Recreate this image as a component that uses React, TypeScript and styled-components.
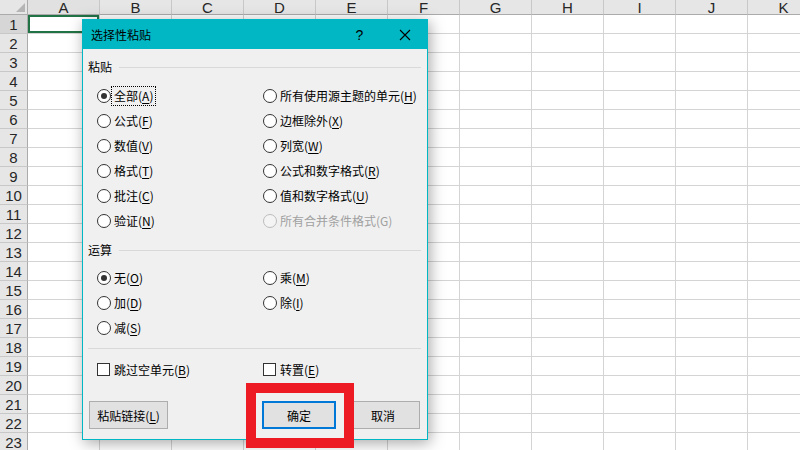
import React from "react"
import styled, { createGlobalStyle } from "styled-components"

const GlobalStyle = createGlobalStyle`
  html, body {
    margin: 0;
    padding: 0;
    background: #ffffff;
    overflow: hidden;
  }
  body {
    font-family: "Noto Sans CJK SC", "Liberation Sans", sans-serif;
  }
`

const COLUMNS = ["A", "B", "C", "D", "E", "F", "G", "H", "I", "J", "K"]
const ROW_COUNT = 23

const pasteOptions = [
  { label: "全部", key: "A", checked: true, focused: true },
  { label: "所有使用源主题的单元", key: "H" },
  { label: "公式", key: "F" },
  { label: "边框除外", key: "X" },
  { label: "数值", key: "V" },
  { label: "列宽", key: "W" },
  { label: "格式", key: "T" },
  { label: "公式和数字格式", key: "R" },
  { label: "批注", key: "C" },
  { label: "值和数字格式", key: "U" },
  { label: "验证", key: "N" },
  { label: "所有合并条件格式", key: "G", disabled: true },
]

const operationOptions = [
  { label: "无", key: "O", checked: true },
  { label: "乘", key: "M" },
  { label: "加", key: "D" },
  { label: "除", key: "I" },
  { label: "减", key: "S" },
]

type Opt = { label: string; key: string; checked?: boolean; focused?: boolean; disabled?: boolean }

function App() {
  return (
    <>
      <GlobalStyle />
      <Screen>
        <Sheet>
          <Corner />
          {COLUMNS.map((c) => (
            <ColHeader key={c} $active={c === "A"}>{c}</ColHeader>
          ))}
          {Array.from({ length: ROW_COUNT }).map((_, r) => (
            <React.Fragment key={r}>
              <RowHeader $active={r === 0}>{r + 1}</RowHeader>
              {COLUMNS.map((c) => (
                <Cell key={c} $selected={r === 0 && c === "A"} />
              ))}
            </React.Fragment>
          ))}
        </Sheet>

        <Dialog>
          <TitleBar>
            <Title>选择性粘贴</Title>
            <TitleButton>?</TitleButton>
            <TitleButton>
              <svg width="12" height="12" viewBox="0 0 12 12">
                <path d="M1 1 L11 11 M11 1 L1 11" stroke="#000" strokeWidth="1.1" />
              </svg>
            </TitleButton>
          </TitleBar>

          <Body>
            <SectionHeader>
              <span>粘贴</span>
            </SectionHeader>
            <OptionGrid $top={6}>
              {pasteOptions.map((o: Opt) => (
                <RadioOption key={o.key} opt={o} />
              ))}
            </OptionGrid>

            <SectionHeader $top={7}>
              <span>运算</span>
            </SectionHeader>
            <OptionGrid $top={5}>
              {operationOptions.map((o: Opt) => (
                <RadioOption key={o.key} opt={o} />
              ))}
            </OptionGrid>

            <Divider />

            <OptionGrid $top={8}>
              <Option>
                <Checkbox />
                <OptionText>跳过空单元(<u>B</u>)</OptionText>
              </Option>
              <Option>
                <Checkbox />
                <OptionText>转置(<u>E</u>)</OptionText>
              </Option>
            </OptionGrid>

            <ButtonRow>
              <Button $width={79}>粘贴链接(<u>L</u>)</Button>
              <ButtonGroup>
                <Button $width={74} $primary>确定</Button>
                <Button $width={74}>取消</Button>
              </ButtonGroup>
            </ButtonRow>
          </Body>
        </Dialog>

        <Highlight />
      </Screen>
    </>
  )
}

function RadioOption({ opt }: { opt: Opt }) {
  return (
    <Option $disabled={opt.disabled}>
      <Radio $checked={opt.checked} $disabled={opt.disabled} />
      <OptionText $focused={opt.focused}>
        {opt.label}(
        {opt.disabled ? opt.key : <u>{opt.key}</u>})
      </OptionText>
    </Option>
  )
}

export default App

const Screen = styled.div`
  position: relative;
  width: 800px;
  height: 450px;
  overflow: hidden;
`

const Sheet = styled.div`
  display: grid;
  grid-template-columns: 28px repeat(11, 72px);
  grid-template-rows: 15px repeat(23, 19px);
  width: 820px;
  font-family: "Liberation Sans", "Open Sans", sans-serif;
`

const Corner = styled.div`
  background: #e6e6e6;
  border-right: 1px solid #ababab;
  border-bottom: 1px solid #ababab;
  box-sizing: border-box;
  position: relative;
  &::after {
    content: "";
    position: absolute;
    right: 2px;
    bottom: 2px;
    border-left: 9px solid transparent;
    border-bottom: 9px solid #b5b5b5;
  }
`

const ColHeader = styled.div<{ $active?: boolean }>`
  background: ${(p) => (p.$active ? "#e1e1e1" : "#e6e6e6")};
  border-right: 1px solid #c8c8c8;
  border-bottom: 1px solid #ababab;
  box-sizing: border-box;
  color: #262626;
  font-size: 15px;
  line-height: 15px;
  text-align: center;
`

const RowHeader = styled.div<{ $active?: boolean }>`
  background: ${(p) => (p.$active ? "#d6d6d6" : "#e6e6e6")};
  border-right: 1px solid #ababab;
  border-bottom: 1px solid #c8c8c8;
  box-sizing: border-box;
  color: #262626;
  font-size: 15px;
  line-height: 19px;
  text-align: center;
`

const Cell = styled.div<{ $selected?: boolean }>`
  border-right: 1px solid #d4d4d4;
  border-bottom: 1px solid #d4d4d4;
  box-sizing: border-box;
  background: #fff;
  box-shadow: ${(p) => (p.$selected ? "inset 0 0 0 2px #217346" : "none")};
`

const Dialog = styled.div`
  position: absolute;
  left: 82px;
  top: 19px;
  width: 346px;
  height: 421px;
  box-sizing: border-box;
  border: 1px solid #00b7c3;
  background: #f0f0f0;
  box-shadow: 2px 3px 14px rgba(0, 0, 0, 0.35);
  display: flex;
  flex-direction: column;
  font-size: 12px;
  color: #000;
`

const TitleBar = styled.div`
  height: 29px;
  background: #00b7c3;
  display: flex;
  align-items: center;
  padding-left: 8px;
`

const Title = styled.div`
  flex: 1;
  font-size: 12px;
  line-height: 16px;
`

const TitleButton = styled.div`
  width: 45px;
  height: 29px;
  display: flex;
  align-items: center;
  justify-content: center;
  font-family: "Liberation Sans", sans-serif;
  font-size: 14px;
`

const Body = styled.div`
  flex: 1;
  display: flex;
  flex-direction: column;
  padding: 8px 6px 10px 5px;
`

const SectionHeader = styled.div<{ $top?: number }>`
  height: 20px;
  margin-top: ${(p) => p.$top ?? 0}px;
  display: flex;
  align-items: center;
  gap: 7px;
  line-height: 16px;
  &::after {
    content: "";
    flex: 1;
    height: 1px;
    background: #d9d9d9;
  }
`

const OptionGrid = styled.div<{ $top?: number }>`
  margin-top: ${(p) => p.$top ?? 0}px;
  margin-left: 9px;
  display: grid;
  grid-template-columns: 166px 1fr;
  grid-auto-rows: 25px;
`

const Option = styled.div<{ $disabled?: boolean }>`
  display: flex;
  align-items: center;
  gap: 5px;
  color: ${(p) => (p.$disabled ? "#a0a0a0" : "#000")};
`

const Radio = styled.span<{ $checked?: boolean; $disabled?: boolean }>`
  width: 14px;
  height: 14px;
  box-sizing: border-box;
  border-radius: 50%;
  border: 1px solid ${(p) => (p.$disabled ? "#bcbcbc" : "#333")};
  background: ${(p) => (p.$disabled ? "#f4f4f4" : "#fff")};
  display: flex;
  align-items: center;
  justify-content: center;
  flex-shrink: 0;
  margin-right: -1px;
  &::after {
    content: "";
    width: 6px;
    height: 6px;
    border-radius: 50%;
    background: ${(p) => (p.$checked ? "#333" : "transparent")};
  }
`

const Checkbox = styled.span`
  width: 13px;
  height: 13px;
  box-sizing: border-box;
  border: 1px solid #333;
  background: #fff;
  flex-shrink: 0;
`

const OptionText = styled.span<{ $focused?: boolean }>`
  line-height: 16px;
  padding: 1px 2px;
  margin-left: -3px;
  outline: ${(p) => (p.$focused ? "1px dotted #000" : "none")};
  u {
    text-underline-offset: 2px;
  }
`

const Divider = styled.div`
  margin-top: 8px;
  height: 1px;
  background: #d9d9d9;
`

const ButtonRow = styled.div`
  margin-top: auto;
  display: flex;
  justify-content: space-between;
  padding: 0 1px;
`

const ButtonGroup = styled.div`
  display: flex;
  gap: 10px;
`

const Button = styled.div<{ $width: number; $primary?: boolean }>`
  width: ${(p) => p.$width}px;
  height: 28px;
  box-sizing: border-box;
  background: #e1e1e1;
  border: ${(p) => (p.$primary ? "2px solid #0078d7" : "1px solid #adadad")};
  display: flex;
  align-items: center;
  justify-content: center;
  font-size: 12px;
  u {
    text-underline-offset: 2px;
  }
`

const Highlight = styled.div`
  position: absolute;
  left: 246px;
  top: 383px;
  width: 108px;
  height: 65px;
  box-sizing: border-box;
  border: 10px solid #ed1c24;
`
